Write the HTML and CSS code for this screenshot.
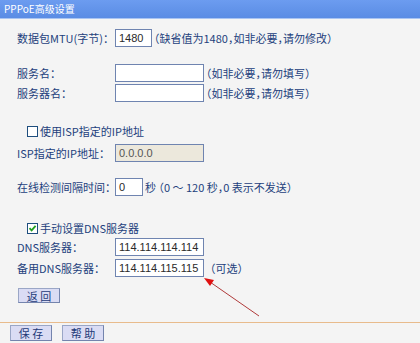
FILE: index.html
```html
<!DOCTYPE html>
<html lang="zh-CN">
<head>
<meta charset="utf-8">
<title>PPPoE高级设置</title>
<link rel="stylesheet" href="styles.css">
</head>
<body>
<div class="page">
  <div class="titlebar">PPPoE高级设置</div>
  <div class="content">
    <div class="row r-mtu">
      <span class="label">数据包MTU(字节)：</span>
      <span class="field"><span class="input w-mtu">1480</span><span class="hint">（缺省值为1480，如非必要，请勿修改）</span></span>
    </div>
    <div class="row r-svc">
      <span class="label">服务名：</span>
      <span class="field"><span class="input w-wide"></span><span class="hint">（如非必要，请勿填写）</span></span>
    </div>
    <div class="row">
      <span class="label">服务器名：</span>
      <span class="field"><span class="input w-wide"></span><span class="hint">（如非必要，请勿填写）</span></span>
    </div>
    <div class="row check-row r-isp-check">
      <span class="checkbox"></span><span>使用ISP指定的IP地址</span>
    </div>
    <div class="row r-isp">
      <span class="label">ISP指定的IP地址：</span>
      <span class="field"><span class="input w-wide disabled">0.0.0.0</span></span>
    </div>
    <div class="row r-interval">
      <span class="label">在线检测间隔时间：</span>
      <span class="field"><span class="input w-small">0</span><span class="hint">秒 （0 ～ 120 秒，0 表示不发送）</span></span>
    </div>
    <div class="row check-row r-dns-check">
      <span class="checkbox checked"><svg viewBox="0 0 11 11" width="11" height="11"><path d="M2.5 5.2 L4.6 7.4 L8.6 2.8" fill="none" stroke="#22a020" stroke-width="1.8"/></svg></span><span>手动设置DNS服务器</span>
    </div>
    <div class="row">
      <span class="label">DNS服务器：</span>
      <span class="field"><span class="input w-wide">114.114.114.114</span></span>
    </div>
    <div class="row r-dns2">
      <span class="label">备用DNS服务器：</span>
      <span class="field"><span class="input w-wide">114.114.115.115</span><span class="hint hint-gap">（可选）</span></span>
    </div>
    <div class="btn-row">
      <span class="btn">返 回</span>
    </div>
  </div>
  <div class="footer">
    <span class="btn btn-lg">保 存</span>
    <span class="btn btn-lg">帮 助</span>
  </div>
  <svg class="arrow" width="420" height="343" viewBox="0 0 420 343">
    <line x1="259" y1="316" x2="210" y2="282" stroke="#b03a3a" stroke-width="1"/>
    <path d="M204 278 L214 280 L210 286 Z" fill="#e01010"/>
  </svg>
</div>
</body>
</html>
```
FILE: styles.css
```css
* { box-sizing: border-box; }
html, body { margin: 0; padding: 0; }
body {
  background: #f4f4f4;
  font-family: "Noto Sans CJK SC", "Noto Sans", sans-serif;
  font-size: 11px;
  color: #233f7c;
  font-feature-settings: "halt";
}
.page {
  position: relative;
  width: 420px;
  height: 343px;
  overflow: hidden;
  background: #f4f4f4;
}
.titlebar {
  height: 19px;
  background: linear-gradient(#6c9cf0, #5a8ce4);
  border-bottom: 1px solid #a9c4f2;
  color: #fff;
  font-size: 10px;
  line-height: 18px;
  padding-left: 4px;
}
.content {
  padding: 9px 0 0 17px;
}
.row {
  display: grid;
  grid-template-columns: 98px auto;
  align-items: center;
  height: 20px;
  white-space: nowrap;
}
.label { line-height: 20px; }
.field { display: flex; align-items: center; }
.input {
  display: inline-block;
  height: 18px;
  border: 1px solid #6f84b0;
  background: #fff;
  color: #2a2a2a;
  font-family: "Liberation Sans", sans-serif;
  font-size: 11px;
  line-height: 16px;
  padding-left: 3px;
}
.w-mtu { width: 37px; }
.w-wide { width: 89px; }
.w-small { width: 28px; }
.disabled { background: #ece8dc; color: #555; }
.hint { margin-left: 2px; }
.hint-gap { margin-left: 6px; }
.r-svc { margin-top: 15px; }
.check-row {
  display: flex;
  align-items: center;
  padding-left: 10px;
  gap: 2px;
}
.r-isp-check { margin-top: 18px; }
.r-isp { margin-top: 2px; }
.r-interval { margin-top: 14px; }
.r-dns-check { margin-top: 22px; height: 18px; }
.r-dns2 { margin-top: 1px; }
.checkbox {
  display: inline-flex;
  width: 11px;
  height: 11px;
  border: 1px solid #1e4e7e;
  background: #fff;
  align-items: center;
  justify-content: center;
}
.checkbox svg { display: block; margin: -1px; }
.btn-row {
  margin-top: 10px;
  padding-left: 1px;
  height: 15px;
  display: flex;
}
.btn {
  display: inline-flex;
  align-items: center;
  justify-content: center;
  width: 42px;
  height: 15px;
  background: #dadcf4;
  border: 1px solid #7484ad;
  border-top-color: #9aa6c6;
  border-left-color: #9aa6c6;
  color: #1e3a78;
  font-size: 11px;
}
.btn-lg { height: 16px; }
.footer {
  margin-top: 19px;
  border-top: 1px solid #e8bb8c;
  padding: 2px 0 0 10px;
  display: flex;
  gap: 10px;
}
.arrow {
  position: absolute;
  left: 0;
  top: 0;
  pointer-events: none;
}
```
